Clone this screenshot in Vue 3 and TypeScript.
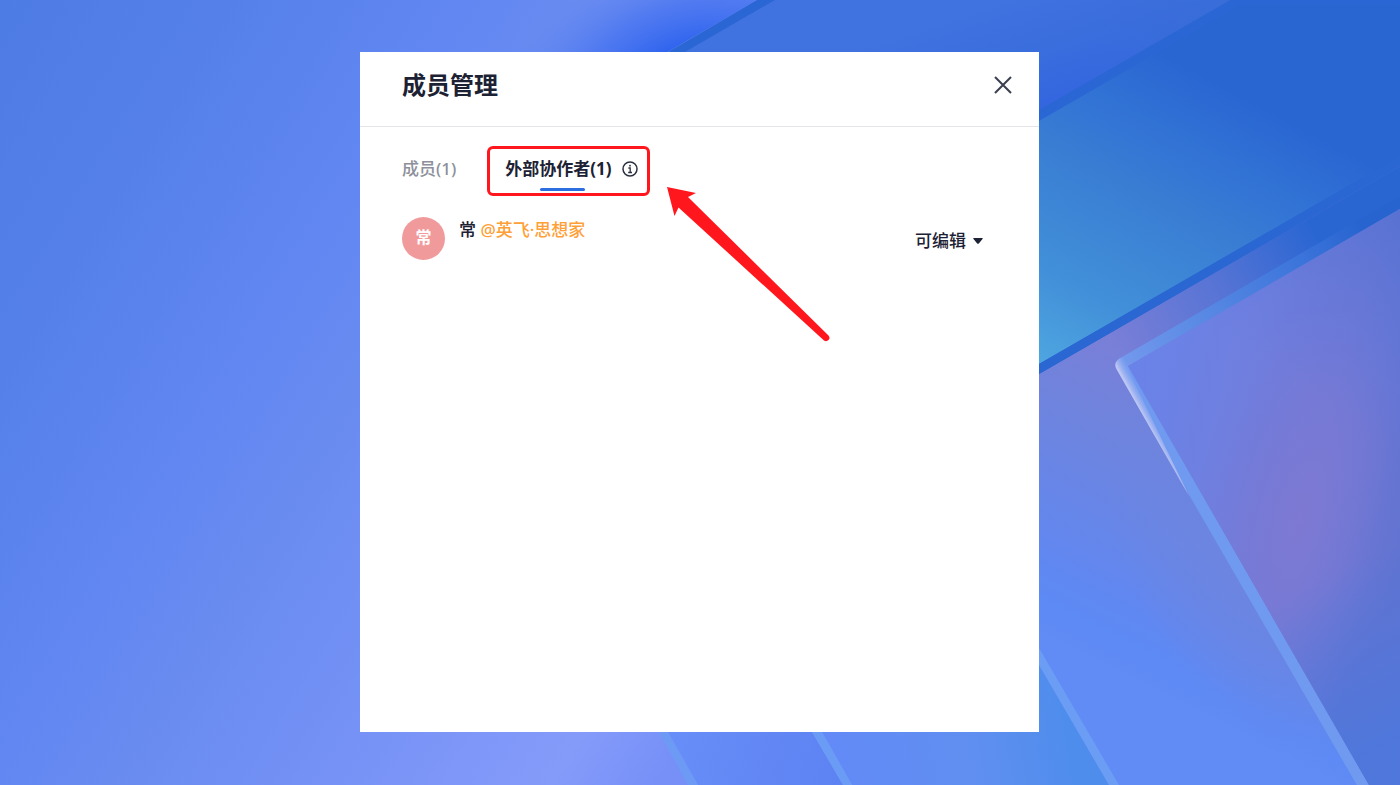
<script setup lang="ts">
import { ref } from 'vue'

interface Member {
  name: string
  company: string
  permission: string
}

const activeTab = ref<'members' | 'external'>('external')
const members = ref<Member[]>([{ name: '常', company: '@英飞·思想家', permission: '可编辑' }])
const permissions = ['可编辑']
</script>

<template>
  <div class="page">
    <svg class="backdrop" viewBox="0 0 1400 785" preserveAspectRatio="xMidYMid slice" aria-hidden="true">
      <defs>
        <linearGradient id="left" gradientUnits="userSpaceOnUse" x1="0" y1="0" x2="853" y2="521">
          <stop offset="0" stop-color="#4d7ce4" />
          <stop offset="0.2" stop-color="#5580ea" />
          <stop offset="0.4" stop-color="#6287f2" />
          <stop offset="0.5" stop-color="#688bf0" />
          <stop offset="0.69" stop-color="#7692f6" />
          <stop offset="0.88" stop-color="#859bfa" />
          <stop offset="0.97" stop-color="#7690f8" />
        </linearGradient>
        <radialGradient id="spot" gradientUnits="userSpaceOnUse" cx="0" cy="0" r="1" gradientTransform="translate(690 80) rotate(-18) scale(200 125)">
          <stop offset="0" stop-color="#265ef0" />
          <stop offset="0.25" stop-color="#2c62ee" />
          <stop offset="0.6" stop-color="#4673f0" stop-opacity="0.75" />
          <stop offset="1" stop-color="#5f83f0" stop-opacity="0" />
        </radialGradient>
        <linearGradient id="top" gradientUnits="userSpaceOnUse" x1="1000" y1="0" x2="1040" y2="120">
          <stop offset="0" stop-color="#4073e0" />
          <stop offset="0.45" stop-color="#3b6edd" />
          <stop offset="1" stop-color="#3264e0" />
        </linearGradient>
        <linearGradient id="topFade" gradientUnits="userSpaceOnUse" x1="1110" y1="0" x2="1210" y2="40">
          <stop offset="0" stop-color="#396dd8" stop-opacity="0" />
          <stop offset="1" stop-color="#396dd8" />
        </linearGradient>
        <linearGradient id="teal" gradientUnits="userSpaceOnUse" x1="1039" y1="364" x2="1195" y2="71">
          <stop offset="0" stop-color="#4ea6e0" />
          <stop offset="0.25" stop-color="#4290d9" />
          <stop offset="0.6" stop-color="#397dd3" />
          <stop offset="0.8" stop-color="#3172d5" />
          <stop offset="1" stop-color="#2a66d2" />
        </linearGradient>
        <linearGradient id="violet" gradientUnits="userSpaceOnUse" x1="1120" y1="340" x2="985" y2="607">
          <stop offset="0" stop-color="#7a7fd7" />
          <stop offset="0.3" stop-color="#6e84de" />
          <stop offset="0.75" stop-color="#6187f0" />
          <stop offset="0.9" stop-color="#5d8af5" />
          <stop offset="1" stop-color="#618bf5" />
        </linearGradient>
        <radialGradient id="violetRight" gradientUnits="userSpaceOnUse" cx="0" cy="0" r="1" gradientTransform="translate(1240 560) rotate(-28) scale(110 220)">
          <stop offset="0" stop-color="#6c85e0" />
          <stop offset="0.4" stop-color="#6c85e0" stop-opacity="0.7" />
          <stop offset="1" stop-color="#6c85e0" stop-opacity="0" />
        </radialGradient>
        <linearGradient id="stripFade" gradientUnits="userSpaceOnUse" x1="1110" y1="340" x2="1310" y2="225">
          <stop offset="0" stop-color="#2a66d2" stop-opacity="0" />
          <stop offset="0.5" stop-color="#2a66d2" stop-opacity="0.42" />
          <stop offset="1" stop-color="#2a66d2" />
        </linearGradient>
        <linearGradient id="edge" gradientUnits="userSpaceOnUse" x1="1120" y1="362" x2="1360" y2="223">
          <stop offset="0" stop-color="#7399ed" />
          <stop offset="0.4" stop-color="#5486e2" />
          <stop offset="0.75" stop-color="#3b74da" />
          <stop offset="1" stop-color="#2864d0" />
        </linearGradient>
        <linearGradient id="right" gradientUnits="userSpaceOnUse" x1="1128" y1="380" x2="1400" y2="440">
          <stop offset="0" stop-color="#6a83e9" />
          <stop offset="0.4" stop-color="#6f7fdf" />
          <stop offset="0.75" stop-color="#7079d5" />
          <stop offset="1" stop-color="#6173d0" />
        </linearGradient>
        <radialGradient id="purple" gradientUnits="userSpaceOnUse" cx="0" cy="0" r="1" gradientTransform="translate(1300 520) rotate(14) scale(110 270)">
          <stop offset="0" stop-color="#7e79d3" />
          <stop offset="0.45" stop-color="#7a79d4" stop-opacity="0.6" />
          <stop offset="1" stop-color="#7478d8" stop-opacity="0" />
        </radialGradient>
        <linearGradient id="rightTop" gradientUnits="userSpaceOnUse" x1="1400" y1="205" x2="1280" y2="370">
          <stop offset="0" stop-color="#5872d2" />
          <stop offset="1" stop-color="#6078dc" stop-opacity="0" />
        </linearGradient>
        <linearGradient id="rightFoot" gradientUnits="userSpaceOnUse" x1="1320" y1="580" x2="1400" y2="740">
          <stop offset="0" stop-color="#4d78dd" stop-opacity="0" />
          <stop offset="1" stop-color="#4d78dd" stop-opacity="0.9" />
        </linearGradient>
        <linearGradient id="gloss" gradientUnits="userSpaceOnUse" x1="1135" y1="400" x2="1146" y2="394">
          <stop offset="0" stop-color="#bec6f3" />
          <stop offset="1" stop-color="#7399ed" stop-opacity="0" />
        </linearGradient>
        <linearGradient id="foot" gradientUnits="userSpaceOnUse" x1="820" y1="700" x2="1060" y2="660">
          <stop offset="0" stop-color="#638af7" />
          <stop offset="0.6" stop-color="#5f8ff0" />
          <stop offset="1" stop-color="#4e8dec" />
        </linearGradient>
        <linearGradient id="footMiddle" gradientUnits="userSpaceOnUse" x1="680" y1="740" x2="840" y2="785">
          <stop offset="0" stop-color="#678df8" />
          <stop offset="1" stop-color="#5d82f2" />
        </linearGradient>
      </defs>
      <rect width="1400" height="785" fill="url(#left)" />
      <path d="M480 0H757L640 68H480Z" fill="url(#spot)" />
      <path d="M757 0H1400V785H960V52H668Z" fill="#2a66d4" />
      <path d="M775 0H1230L1039 110L960 156V52H685Z" fill="url(#top)" />
      <path d="M1080 0H1230L1039 110Z" fill="url(#topFade)" />
      <path d="M1000 143L1039 121L1240 5H1400V156L1039 364L1000 387Z" fill="url(#teal)" />
      <path d="M1039 374L1400 166V785H1039Z" fill="url(#violet)" />
      <path d="M1117 370L1357 785H1039V374Z" fill="url(#violetRight)" />
      <path d="M1039 364L1400 156V166L1039 374Z" fill="#2a67d2" />
      <path d="M1039 374L1400 166V215L1115 380L1039 424Z" fill="url(#stripFade)" />
      <path d="M1122 357L1400 196V210L1128 366L1369 785H1357L1117 370Q1112 362 1122 357Z" fill="url(#edge)" />
      <path d="M1128 366L1369 785H1357L1117 370Z" fill="#7099f0" />
      <path d="M1122 357Q1112 362 1117 370L1189 496L1137 388Q1128 370 1128 364Z" fill="url(#gloss)" />
      <path d="M1128 366L1400 209V785H1369Z" fill="url(#right)" />
      <path d="M1128 366L1400 209V785H1369Z" fill="url(#purple)" />
      <path d="M1128 366L1400 209V785H1369Z" fill="url(#rightTop)" />
      <path d="M1128 366L1400 209V785H1369Z" fill="url(#rightFoot)" />
      <path d="M822 732H1039V665L1109 785H852Z" fill="url(#foot)" />
      <path d="M1039 648L1119 785H1109L1039 665Z" fill="#6b9df5" />
      <path d="M668 732H812L843 785H698Z" fill="url(#footMiddle)" />
      <path d="M659 732H668L698 785H688Z" fill="#6c9af5" />
      <path d="M812 732H822L852 785H843Z" fill="#6b9cf5" />
    </svg>

    <section class="dialog" role="dialog" aria-labelledby="dialog-title">
      <header class="header">
        <h1 id="dialog-title" class="title">成员管理</h1>
        <button class="close" type="button" aria-label="关闭">
          <svg width="18" height="18" viewBox="0 0 18 18" fill="none" stroke="#3b3f4e" stroke-width="2">
            <path d="M1 1L17 17M17 1L1 17" />
          </svg>
        </button>
      </header>

      <div class="body">
        <div class="tabs" role="tablist">
          <button class="tab" :class="{ active: activeTab === 'members' }" type="button" role="tab" :aria-selected="activeTab === 'members'" @click="activeTab = 'members'">成员(1)</button>
          <div class="marked">
            <button class="tab" :class="{ active: activeTab === 'external' }" type="button" role="tab" :aria-selected="activeTab === 'external'" @click="activeTab = 'external'">外部协作者(1)</button>
            <svg class="info" width="16" height="16" viewBox="0 0 16 16" fill="none" stroke="#2b3040" aria-hidden="true">
              <circle cx="8" cy="8" r="7" stroke-width="1.5" />
              <path d="M6.4 7H8.2V11.4M6.2 11.5H10" stroke-width="1.3" />
              <circle cx="8" cy="4.7" r="0.9" fill="#2b3040" stroke="none" />
            </svg>
          </div>
        </div>

        <ul class="list">
          <li v-for="(member, index) in members" :key="index" class="member">
            <span class="avatar">{{ member.name }}</span>
            <p class="name">{{ member.name }} <span class="company">{{ member.company }}</span></p>
            <label class="permission">
              <select v-model="member.permission" aria-label="权限">
                <option v-for="item in permissions" :key="item">{{ item }}</option>
              </select>
              <svg width="10" height="6" viewBox="0 0 10 6" aria-hidden="true">
                <path d="M1 0H9Q10.4 0 9.5 1L5.8 5.4Q5 6.2 4.2 5.4L0.5 1Q-0.4 0 1 0Z" fill="#1c2233" />
              </svg>
            </label>
          </li>
        </ul>
      </div>

      <svg class="arrow" width="164" height="156" viewBox="0 0 164 156" aria-hidden="true">
        <path d="M0 0L29 6L21 10L161.500 148.500Q163.500 151 161.500 153Q159.500 155 157 153.500L11.500 20.500L7.500 29Z" fill="#ff171d" />
      </svg>
    </section>
  </div>
</template>

<style>
body {
  margin: 0;
}
</style>

<style scoped>
.page {
  position: relative;
  box-sizing: border-box;
  min-height: 100vh;
  padding: 52px 1px 53px 0;
  display: flex;
  justify-content: center;
  align-items: stretch;
  overflow: hidden;
  color: #1c2233;
  font-family: "Noto Sans", "Noto Sans CJK SC", sans-serif;
}
.backdrop {
  position: absolute;
  inset: 0;
  width: 100%;
  height: 100%;
}
.dialog {
  position: relative;
  width: 100%;
  max-width: 679px;
  background: #fff;
}
.header {
  display: flex;
  justify-content: space-between;
  align-items: center;
  padding: 15px 27px 23px 42px;
  border-bottom: 1px solid #e4e5e8;
}
.title {
  margin: 0;
  font-size: 24px;
  line-height: 36px;
  font-weight: 700;
}
button {
  padding: 0;
  border: 0;
  background: none;
  font: inherit;
  cursor: pointer;
}
.close {
  display: flex;
}
.body {
  padding: 19px 42px;
}
.tabs {
  display: flex;
  align-items: flex-start;
  gap: 31px;
}
.tab {
  position: relative;
  height: 50px;
  padding-bottom: 4px;
  font-size: 17px;
  line-height: 24px;
  font-weight: 500;
  color: #8d909a;
}
.tab.active {
  color: #1c2233;
  font-weight: 700;
}
.tab.active::after {
  content: "";
  position: absolute;
  left: calc(50% + 4px);
  bottom: 5px;
  width: 45px;
  height: 3px;
  margin-left: -22px;
  border-radius: 2px;
  background: #2c6ee0;
}
.marked {
  position: relative;
  display: flex;
  gap: 10px;
  padding: 0 12px 0 18px;
}
.marked::before {
  content: "";
  position: absolute;
  inset: 0;
  border: 3px solid #ff171d;
  border-radius: 6px;
  pointer-events: none;
}
.info {
  margin-top: 15px;
}
.list {
  margin: 21px 0 0;
  padding: 0;
  list-style: none;
}
.member {
  display: flex;
  align-items: flex-start;
  padding-right: 14px;
}
.avatar {
  width: 43px;
  height: 43px;
  border-radius: 50%;
  background: #f19a9c;
  color: #fff;
  font-size: 16px;
  line-height: 41px;
  font-weight: 700;
  text-align: center;
}
.name {
  flex: 1;
  margin: 0 0 0 14px;
  font-size: 17px;
  line-height: 26px;
  font-weight: 500;
}
.company {
  color: #ff9f38;
}
.permission {
  display: flex;
  align-items: center;
  gap: 7px;
  height: 48px;
}
.permission select {
  appearance: none;
  padding: 0;
  border: 0;
  background: none;
  color: inherit;
  font: inherit;
  font-size: 17px;
  font-weight: 500;
  line-height: 26px;
}
.arrow {
  position: absolute;
  left: 307px;
  top: 135px;
}
</style>
